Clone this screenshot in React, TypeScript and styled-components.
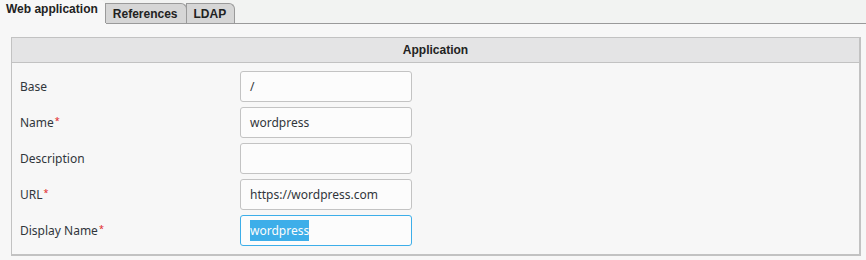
import React from 'react'
import styled, { createGlobalStyle } from 'styled-components'

const GlobalStyle = createGlobalStyle`
  html, body {
    margin: 0;
    padding: 0;
    background: #f7f7f7;
  }
  body {
    font-family: "Noto Sans", "Open Sans", sans-serif;
    font-size: 12px;
    color: #31363b;
  }
`

const fields = [
  { id: 1, label: 'Base', value: '/', required: false },
  { id: 2, label: 'Name', value: 'wordpress', required: true },
  { id: 3, label: 'Description', value: '', required: false },
  { id: 4, label: 'URL', value: 'https://wordpress.com', required: true },
  { id: 5, label: 'Display Name', value: 'wordpress', required: true, focused: true },
]

const tabs = ['Web application', 'References', 'LDAP']

const App = () => {
  return (
    <Page>
      <GlobalStyle />
      <TabBar>
        {tabs.map((tab, i) => (
          <Tab key={tab} $active={i === 0}>{tab}</Tab>
        ))}
      </TabBar>
      <Body>
        <Panel>
          <PanelHeader>Application</PanelHeader>
          <Rows>
            {fields.map(field => (
              <Row key={field.id}>
                <Label>
                  {field.label}
                  {field.required && <Star>*</Star>}
                </Label>
                <Field $focused={!!field.focused}>
                  {field.focused ? <Selected>{field.value}</Selected> : field.value}
                </Field>
              </Row>
            ))}
          </Rows>
        </Panel>
      </Body>
    </Page>
  )
}

export default App

const Page = styled.div`
  width: 866px;
  height: 260px;
  overflow: hidden;
`

const TabBar = styled.div`
  display: flex;
  align-items: flex-end;
  height: 23px;
  background: #f2f3f2;
  border-bottom: 1px solid #9a9a9a;
`

const Tab = styled.div<{ $active: boolean }>`
  font-family: "Liberation Sans", Arial, sans-serif;
  font-weight: 700;
  font-size: 12px;
  color: #222;
  box-sizing: border-box;
  height: ${p => (p.$active ? '24px' : '20px')};
  line-height: ${p => (p.$active ? '18px' : '20px')};
  padding: ${p => (p.$active ? '0 8px 0 6px' : '0 8px 0 7px')};
  margin-bottom: ${p => (p.$active ? '-1px' : '0')};
  background: ${p => (p.$active ? '#f7f7f7' : '#d6d6d6')};
  border: ${p => (p.$active ? 'none' : '1px solid #9a9a9a')};
  border-bottom: none;
  border-radius: 0 6px 0 0;
  margin-left: ${p => (p.$active ? '0' : '-1px')};
`

const Body = styled.div`
  padding: 13px 5px 0 11px;
`

const Panel = styled.div`
  border: 1px solid #c2c2c2;
  border-right-width: 2px;
  border-bottom-width: 2px;
  background: #f7f7f7;
`

const PanelHeader = styled.div`
  height: 24px;
  line-height: 24px;
  background: #e4e4e5;
  border-bottom: 1px solid #c2c2c2;
  text-align: center;
  font-family: "Liberation Sans", Arial, sans-serif;
  font-weight: 700;
  font-size: 12px;
  color: #222;
`

const Rows = styled.div`
  display: flex;
  flex-direction: column;
  gap: 5px;
  padding: 8px 8px 8px 8px;
`

const Row = styled.div`
  display: grid;
  grid-template-columns: 220px 172px;
  align-items: center;
`

const Label = styled.div`
  font-size: 12px;
  color: #31363b;
`

const Star = styled.span`
  color: #e01b1b;
  font-size: 9px;
  vertical-align: 3px;
  margin-left: 1px;
`

const Field = styled.div<{ $focused: boolean }>`
  box-sizing: border-box;
  height: 31px;
  line-height: 29px;
  padding: 0 9px;
  background: #fcfcfc;
  border: 1px solid ${p => (p.$focused ? '#3daee9' : '#c3c3c3')};
  border-radius: 3px;
  font-size: 12px;
  color: #31363b;
  white-space: nowrap;
`

const Selected = styled.span`
  background: #3daee9;
  color: #fcfcfc;
  padding: 2px 0;
`
